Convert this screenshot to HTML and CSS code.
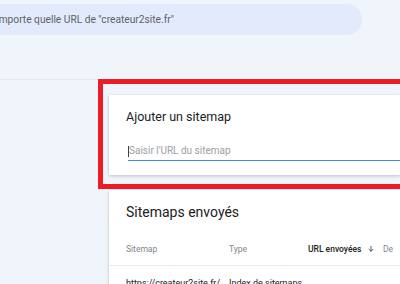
FILE: index.html
```html
<!DOCTYPE html>
<html lang="fr">
<head>
    <meta charset="UTF-8">
    <meta name="viewport" content="width=device-width, initial-scale=1.0">
    <title>Sitemaps - Search Console</title>
    <link rel="stylesheet" href="styles.css">
</head>
<body>
    <header class="topbar">
        <div class="search-pill">
            <div class="search-text">
                <span>Inspecter n'importe quelle URL de "createur2site.fr"</span>
            </div>
        </div>
    </header>

    <main class="content">
        <section class="card card-add">
            <h2 class="card-title">Ajouter un sitemap</h2>
            <div class="field">
                <span class="caret"></span>
                <input type="text" class="url-input" placeholder="Saisir l'URL du sitemap">
            </div>
            <div class="highlight"></div>
        </section>

        <section class="card card-list">
            <h2 class="card-title big">Sitemaps envoyés</h2>
            <div class="table">
                <div class="row head">
                    <span>Sitemap</span>
                    <span>Type</span>
                    <span class="sorted">URL envoyées
                        <svg width="8" height="8" viewBox="0 0 24 24"><path d="M12 3v16M5 12l7 7 7-7" fill="none" stroke="#3c4043" stroke-width="2.6"/></svg>
                    </span>
                    <span>De</span>
                </div>
                <div class="row">
                    <span>https://createur2site.fr/</span>
                    <span>Index de sitemaps</span>
                    <span></span>
                    <span></span>
                </div>
            </div>
        </section>
    </main>
</body>
</html>
```

FILE: styles.css
```css
body {
    margin: 0;
    width: 400px;
    height: 284px;
    overflow: hidden;
    background-color: #f0f4fb;
    font-family: Roboto, "Liberation Sans", sans-serif;
    color: #202124;
}

.topbar {
    height: 80px;
    border-bottom: 1px solid #e3e6ec;
    box-sizing: border-box;
    padding-top: 4px;
}

.search-pill {
    margin-left: -60px;
    width: 422px;
    height: 31px;
    border-radius: 16px;
    background-color: #e2eafb;
    display: flex;
    align-items: center;
}

.search-text {
    margin-left: 60px;
    width: 174px;
    display: flex;
    justify-content: flex-end;
    white-space: nowrap;
    font-size: 10.2px;
    color: #5f6368;
}

.content {
    padding-left: 109px;
    padding-top: 15px;
}

.card {
    background: #fff;
    box-shadow: 0 1px 3px rgba(60, 64, 67, 0.28);
    padding-left: 17px;
}

.card-add {
    position: relative;
    height: 80px;
    box-sizing: border-box;
    padding-top: 14px;
}

.card-title {
    margin: 0;
    font-size: 12.5px;
    line-height: 16px;
    font-weight: 400;
}

.card-title.big {
    font-size: 14px;
    line-height: 18px;
}

.field {
    position: relative;
    margin-top: 17px;
    margin-left: 2px;
    border-bottom: 1.5px solid #4285f4;
}

.caret {
    position: absolute;
    left: 0;
    top: 4px;
    width: 1px;
    height: 11px;
    background: #3c4043;
}

.url-input {
    display: block;
    width: 100%;
    border: none;
    outline: none;
    padding: 2px 0 2px 1px;
    font-family: inherit;
    font-size: 10px;
    line-height: 14px;
    background: transparent;
}

.url-input::placeholder {
    color: #9aa0a6;
}

.highlight {
    position: absolute;
    left: -11px;
    top: -16px;
    width: 320px;
    height: 110px;
    border: 5px solid #ed1c24;
    box-sizing: border-box;
}

.card-list {
    margin-top: 15px;
    padding-top: 13px;
    height: 120px;
}

.table {
    margin-top: 23px;
    font-size: 8.5px;
    line-height: 10px;
}

.row {
    display: grid;
    grid-template-columns: 103px 79px 75px 40px;
    white-space: nowrap;
}

.row.head {
    color: #80868b;
    height: 22px;
    border-bottom: 1px solid #e8eaed;
    box-sizing: border-box;
    margin-left: -17px;
    padding-left: 17px;
}

.row:not(.head) {
    padding-top: 11px;
    font-size: 9px;
    line-height: 12px;
}

.sorted {
    color: #202124;
    font-weight: 500;
    display: flex;
    gap: 6px;
    align-items: flex-start;
}

.sorted svg {
    margin-top: 1px;
}
```
